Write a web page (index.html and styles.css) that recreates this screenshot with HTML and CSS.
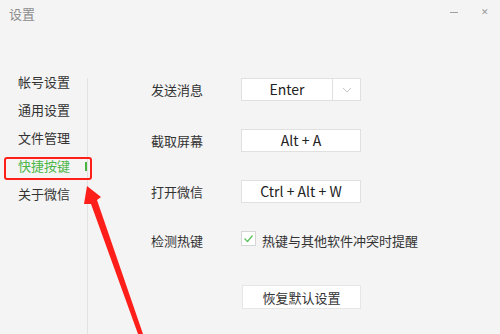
FILE: index.html
```html
<!DOCTYPE html>
<html>
<head>
  <link rel="stylesheet" href="styles.css">
</head>
<body>
  <div class="window">
    <!-- title bar -->
    <div class="titlebar">
      <span class="title">设置</span>
      <div class="win-btns">
        <span class="btn-min"></span>
        <span class="btn-close">&#x2715;</span>
      </div>
    </div>

    <div class="main">
      <!-- left menu -->
      <ul class="menu">
        <li>帐号设置</li>
        <li>通用设置</li>
        <li>文件管理</li>
        <li class="active">快捷按键</li>
        <li>关于微信</li>
      </ul>

      <!-- shortcut settings -->
      <div class="content">
        <div class="row">
          <span class="label">发送消息</span>
          <div class="keybox select">
            <span class="key">Enter</span>
            <span class="arrow">
              <svg width="10" height="6" viewBox="0 0 10 6"><path d="M1 1 L5 5 L9 1" fill="none" stroke="#c4c4c4" stroke-width="1"/></svg>
            </span>
          </div>
        </div>
        <div class="row">
          <span class="label">截取屏幕</span>
          <div class="keybox"><span class="key">Alt + A</span></div>
        </div>
        <div class="row">
          <span class="label">打开微信</span>
          <div class="keybox"><span class="key">Ctrl + Alt + W</span></div>
        </div>
        <div class="row check-row">
          <span class="label">检测热键</span>
          <span class="checkbox">
            <svg width="13" height="13" viewBox="0 0 13 13"><path d="M2.5 6.5 L5.5 9.5 L10.5 3.5" fill="none" stroke="#5cc05c" stroke-width="1.3"/></svg>
          </span>
          <span class="check-text">热键与其他软件冲突时提醒</span>
        </div>
        <div class="row reset-row">
          <button class="reset">恢复默认设置</button>
        </div>
      </div>
    </div>

    <!-- red annotation -->
    <svg class="mark" width="500" height="334" viewBox="0 0 500 334">
      <rect x="5" y="158" width="86" height="21" rx="2" fill="none" stroke="#ff1f1a" stroke-width="2"/>
      <polygon points="87,186 101,197 97,200 143,334 138,334 91,204 84,204" fill="#ff1f1a"/>
    </svg>
  </div>
</body>
</html>
```

FILE: styles.css
```css
body {
  margin: 0;
  background-color: #f4f4f4;
  font-family: "Noto Sans CJK SC", "Noto Sans", sans-serif;
  color: #333;
}

.window {
  position: relative;
  width: 500px;
  height: 334px;
  overflow: hidden;
}

.titlebar {
  height: 68px;
  display: flex;
  justify-content: space-between;
  align-items: flex-start;
}

.title {
  font-size: 13px;
  line-height: 16px;
  color: #8c8c8c;
  margin: 6px 0 0 9px;
}

.win-btns {
  display: flex;
  align-items: center;
  gap: 23px;
  margin: 5px 11px 0 0;
}

.btn-min {
  width: 8px;
  height: 1px;
  background-color: #a0a0a0;
}

.btn-close {
  font-size: 9px;
  line-height: 14px;
  color: #999;
}

.main {
  display: flex;
}

.menu {
  list-style: none;
  margin: 0;
  padding: 0;
  width: 88px;
  height: 266px;
  background: linear-gradient(#e2e2e2, #e2e2e2) right 10px / 1px 100% no-repeat;
}

.menu li {
  position: relative;
  height: 28px;
  line-height: 28px;
  font-size: 13px;
  padding-left: 18px;
  color: #333;
}

.menu li.active {
  color: #4cb648;
}

.menu li.active::after {
  content: "";
  position: absolute;
  right: 1px;
  top: 10px;
  width: 2px;
  height: 9px;
  background-color: #46b43f;
}

.content {
  padding: 10px 0 0 63px;
  display: flex;
  flex-direction: column;
  gap: 28px;
}

.row {
  display: flex;
  align-items: center;
  height: 23px;
}

.label {
  width: 90px;
  font-size: 13px;
  line-height: 23px;
}

.keybox {
  width: 118px;
  height: 21px;
  background-color: #fff;
  border: 1px solid #e0e0e0;
  display: flex;
}

.key {
  flex: 1;
  text-align: center;
  font-size: 14px;
  line-height: 21px;
  color: #222;
}

.select .key {
  border-right: 1px solid #e0e0e0;
}

.arrow {
  width: 27px;
  display: flex;
  align-items: center;
  justify-content: center;
}

.check-row {
  height: 20px;
  align-items: flex-start;
}

.check-row .label {
  line-height: 20px;
}

.checkbox {
  width: 13px;
  height: 13px;
  background-color: #fff;
  border: 1px solid #d6d6d6;
  display: flex;
}

.check-text {
  margin-left: 6px;
  font-size: 13px;
  line-height: 20px;
}

.reset-row {
  margin-top: 6px;
  height: 24px;
  padding-left: 91px;
}

.reset {
  width: 119px;
  height: 24px;
  background-color: #fff;
  border: 1px solid #e6e6e6;
  font-family: inherit;
  font-size: 13px;
  color: #333;
  padding: 0;
}

.mark {
  position: absolute;
  left: 0;
  top: 0;
  pointer-events: none;
}
```
